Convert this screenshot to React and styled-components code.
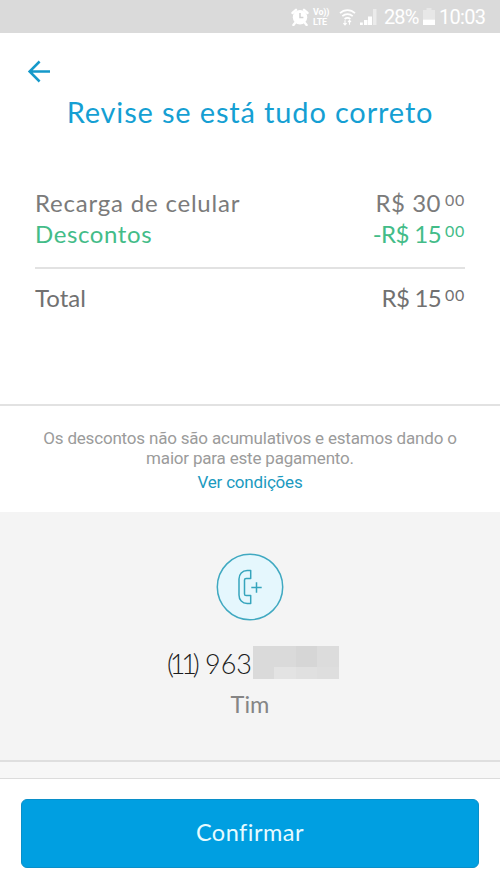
import React from 'react';
import styled, { createGlobalStyle } from 'styled-components';

const GlobalStyle = createGlobalStyle`
  * { box-sizing: border-box; }
  body { margin: 0; background: #fff; }
`;

const Screen = styled.div`
  width: 500px;
  height: 889px;
  display: flex;
  flex-direction: column;
  overflow: hidden;
  background: #fff;
  font-family: 'Lato', sans-serif;
  font-weight: 300;
  color: #747474;
`;

const StatusBar = styled.div`
  height: 33px;
  flex: none;
  display: flex;
  align-items: center;
  padding-left: 291px;
  background: #dadada;
  color: #fff;
  svg { display: block; flex: none; margin-right: 4px; }
`;

const StatusText = styled.span`
  font: 400 20px/34px 'Roboto', sans-serif;
  width: ${(p) => p.$width}px;
  letter-spacing: ${(p) => p.$spacing}px;
  white-space: nowrap;
`;

const Volte = styled.span`
  display: flex;
  flex-direction: column;
  width: 26px;
  font: 700 9px/10px 'Roboto', sans-serif;
  letter-spacing: -0.2px;
  white-space: nowrap;
`;

const StatusGroup = styled.div`
  display: flex;
  align-items: center;
  margin-left: 3px;
`;

const Header = styled.header`
  height: 371px;
  flex: none;
  display: flex;
  flex-direction: column;
`;

const BackButton = styled.button`
  width: 24px;
  height: 24px;
  margin: 26px 0 0 27px;
  padding: 0;
  border: 0;
  background: none;
  svg { display: block; }
`;

const Title = styled.h1`
  margin: 11px 0 0;
  text-align: center;
  font-size: 29px;
  line-height: 36px;
  font-weight: 400;
  letter-spacing: 0.84px;
  color: #159fd3;
`;

const Summary = styled.div`
  margin: 58px 35px 0;
`;

const Row = styled.div`
  display: flex;
  justify-content: space-between;
  height: 31px;
  line-height: 29px;
  font-size: 24px;
  font-weight: 400;
  color: ${(p) => p.$color || '#7b7b7b'};
`;

const Label = styled.span`
  letter-spacing: ${(p) => p.$spacing || 0}px;
`;

const Amount = styled.span`
  display: flex;
  letter-spacing: ${(p) => p.$spacing || 0}px;
`;

const Cents = styled.span`
  font-size: 16px;
  line-height: 24px;
  width: 20px;
  margin-left: 4px;
  letter-spacing: 0.6px;
`;

const Divider = styled.div`
  height: 2px;
  margin: 17px 0 14px;
  background: #e2e2e2;
`;

const Notice = styled.section`
  height: 108px;
  flex: none;
  border-top: 2px solid #e2e2e2;
  padding-top: 22px;
  text-align: center;
  font: 400 17px/20px 'Roboto', sans-serif;
  letter-spacing: -0.19px;
  color: #9b9b9b;
`;

const Conditions = styled.a`
  display: block;
  margin-top: 4px;
  color: #1b9abf;
`;

const Recipient = styled.section`
  height: 250px;
  flex: none;
  display: flex;
  flex-direction: column;
  align-items: center;
  padding-top: 41px;
  background: #f4f4f4;
  border-bottom: 2px solid #dfdfdf;
`;

const PhoneRow = styled.div`
  display: flex;
  align-items: center;
  align-self: flex-start;
  margin: 25px 0 0 167px;
  height: 33px;
`;

const PhonePart = styled.span`
  width: ${(p) => p.$width}px;
  padding-top: 2px;
  font-size: 27px;
  line-height: 36px;
  letter-spacing: ${(p) => p.$spacing}px;
  white-space: nowrap;
  color: #1c1c1c;
`;

const Mosaic = styled.div`
  width: 86px;
  height: 33px;
  display: grid;
  grid-template-columns: 21px 22px 21px 22px;
  grid-template-rows: 21px 12px;
`;

const Tile = styled.span`
  background: ${(p) => p.$tone};
`;

const Carrier = styled.div`
  margin-top: 9px;
  font-size: 23.5px;
  line-height: 32px;
  font-weight: 400;
  color: #858585;
`;

const Gap = styled.div`
  height: 17px;
  flex: none;
  background: #f7f7f7;
  border-bottom: 1px solid #dcdcdc;
`;

const Footer = styled.footer`
  padding: 20px 21px 0;
`;

const ConfirmButton = styled.button`
  display: block;
  width: 100%;
  height: 69px;
  padding: 0 0 4px;
  border: 1px solid #098fc9;
  border-radius: 6px;
  background: #009fe1;
  color: #e6fbff;
  font: 400 23.5px/30px 'Lato', sans-serif;
  letter-spacing: 0.5px;
`;

const tones = ['#dadada', '#dadada', '#d6d6d6', '#dcdcdc', '#dadada', '#e3e3e3', '#e0e0e0', '#dedede'];

const AlarmIcon = () => (
  <svg width="18" height="18" viewBox="0 0 18 18">
    <circle cx="9" cy="9.3" r="7.2" fill="#fff" />
    <path d="M1.5 5 5 1.8M16.5 5 13 1.8M4 15l-1.6 2M14 15l1.6 2" stroke="#fff" strokeWidth="2.4" strokeLinecap="round" />
    <path d="M9 5v4.6h3.4" fill="none" stroke="#d2d2d2" strokeWidth="1.5" />
  </svg>
);

const WifiIcon = () => (
  <svg width="17" height="18" viewBox="0 0 17 18" fill="none" stroke="#fff" strokeWidth="1.7">
    <path d="M1 5.2C5.2 1 11.8 1 16 5.2M3.3 8.2c3-2.8 7.4-2.8 10.4 0M5.6 11c1.8-1.5 4-1.5 5.8 0" />
    <path d="M6 12.2v4.6M4.4 15.2 6 17l1.6-1.8M10.5 16.8v-4M9 14l1.5-1.6L12 14" strokeWidth="1.1" />
  </svg>
);

const SignalIcon = () => (
  <svg width="17" height="17" viewBox="0 0 17 17" fill="#fff">
    <path d="M0 14.5h2.8V17H0zM4 12h3.5v5H4zM8 8.5h4V17H8z" />
    <path d="M13 1h3.5v16H13z" opacity=".45" />
  </svg>
);

const BatteryIcon = () => (
  <svg width="12" height="17" viewBox="0 0 12 17" fill="#fff">
    <path d="M3.5 0h5v2H12v9.5H0V2h3.5z" opacity=".35" />
    <path d="M0 11.5h12V17H0z" />
  </svg>
);

const BackArrow = () => (
  <svg width="24" height="24" viewBox="0 0 24 24" fill="none" stroke="#1599ca" strokeWidth="2.5">
    <path d="M23 12.5H2.5M12.6 2.5 2.6 12.5l10 10" />
  </svg>
);

const PhoneIcon = () => (
  <svg width="68" height="68" viewBox="0 0 68 68" fill="none">
    <circle cx="34" cy="34" r="32.7" fill="#e5f7fd" stroke="#40a9c1" strokeWidth="1.5" />
    <path d="M34.7 17.5h-3.5c-5 0-8.2 3.6-8.2 8.500v16c0 4.9 3.2 8.5 8.2 8.5h3.5v-8h-4.6c-1 0-1.6-.6-1.6-1.6V27.1c0-1 .6-1.6 1.6-1.6h4.6z" stroke="#36a5bd" strokeWidth="1.5" strokeLinejoin="round" />
    <path d="M35.3 34.5h10.4M40.5 29.3v10.4" stroke="#36a5bd" strokeWidth="1.5" />
  </svg>
);

const rows = [
  { label: 'Recarga de celular', value: 'R$ 30', spacing: 0.8, valueSpacing: 0.5 },
  { label: 'Descontos', value: '-R$ 15', spacing: 0.6, valueSpacing: -0.6, color: '#43bc88' },
];

export default function App() {
  return (
    <Screen>
      <GlobalStyle />
      <StatusBar>
        <AlarmIcon />
        <Volte><span>Vo))</span><span>LTE</span></Volte>
        <WifiIcon />
        <SignalIcon />
        <StatusGroup>
          <StatusText $width={39} $spacing={-0.9}>28%</StatusText>
          <BatteryIcon />
          <StatusText $width={50} $spacing={-0.7}>10:03</StatusText>
        </StatusGroup>
      </StatusBar>
      <Header>
        <BackButton aria-label="Voltar"><BackArrow /></BackButton>
        <Title>Revise se está tudo correto</Title>
        <Summary>
          {rows.map((r) => (
            <Row key={r.label} $color={r.color}>
              <Label $spacing={r.spacing}>{r.label}</Label>
              <Amount $spacing={r.valueSpacing}>{r.value}<Cents>00</Cents></Amount>
            </Row>
          ))}
          <Divider />
          <Row $color="#717171">
            <Label>Total</Label>
            <Amount $spacing={-0.7}>R$ 15<Cents>00</Cents></Amount>
          </Row>
        </Summary>
      </Header>
      <Notice>
        <div>Os descontos não são acumulativos e estamos dando o</div>
        <div>maior para este pagamento.</div>
        <Conditions>Ver condições</Conditions>
      </Notice>
      <Recipient>
        <PhoneIcon />
        <PhoneRow>
          <PhonePart $width={38} $spacing={-4.2}>(11)</PhonePart>
          <PhonePart $width={48} $spacing={0}>963</PhonePart>
          <Mosaic>{tones.map((t, i) => <Tile key={i} $tone={t} />)}</Mosaic>
        </PhoneRow>
        <Carrier>Tim</Carrier>
      </Recipient>
      <Gap />
      <Footer><ConfirmButton>Confirmar</ConfirmButton></Footer>
    </Screen>
  );
}
